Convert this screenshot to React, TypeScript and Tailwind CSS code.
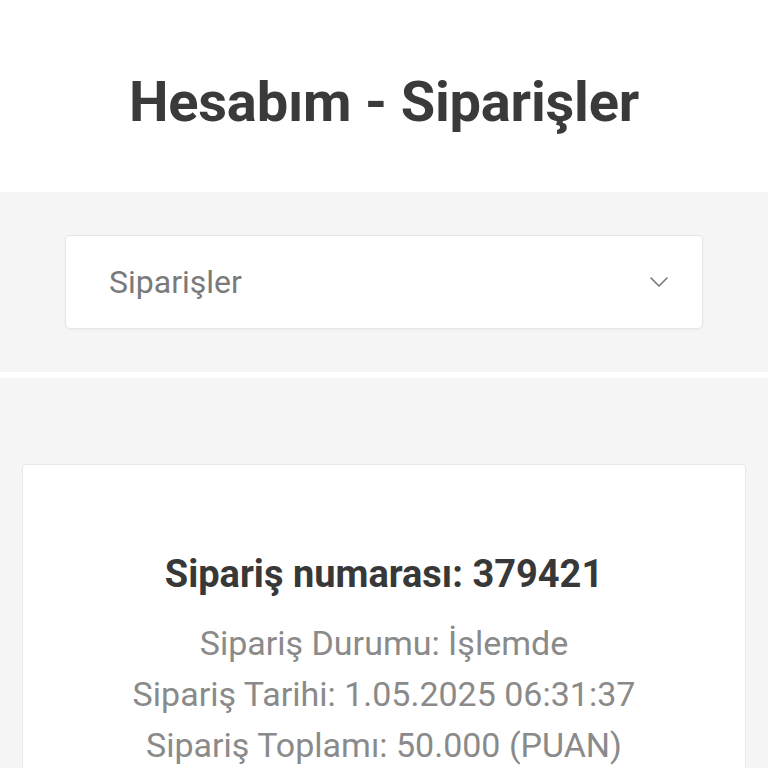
import { ChevronDown } from 'lucide-react';

type Order = {
  id: number;
  status: string;
  date: string;
  total: string;
};

const orders: Order[] = [
  { id: 379421, status: 'İşlemde', date: '1.05.2025 06:31:37', total: '50.000 (PUAN)' },
];

export default function App() {
  return (
    <div className="min-h-screen bg-[#f5f5f5] font-['Roboto',sans-serif]">
      {/* Page title */}
      <div className="bg-white h-[192px] flex items-center justify-center pt-[12px]">
        <h1 className="text-[56px] font-bold text-[#3a3a3a] tracking-[-0.2px]">Hesabım - Siparişler</h1>
      </div>

      {/* Section select */}
      <div className="px-[65px] pt-[43px] pb-[43px]">
        <div className="h-[94px] bg-white border border-[#e6e6e6] rounded-[5px] shadow-[0_1px_2px_rgba(0,0,0,0.04)] flex items-center justify-between pl-[43px] pr-[27px]">
          <span className="text-[32px] text-[#7a7a7a]">Siparişler</span>
          <ChevronDown className="w-[32px] h-[32px] text-[#777]" strokeWidth={1.2} />
        </div>
      </div>

      <div className="h-[6px] bg-white" />

      {/* Orders */}
      <div className="px-[22px] pt-[86px]">
        {orders.map(order => (
          <div key={order.id} className="bg-white border border-[#e8e8e8] rounded-[3px] pt-[81px] pb-[40px] text-center">
            <h2 className="text-[38px] font-bold text-[#383838] mb-[15px]">Sipariş numarası: {order.id}</h2>
            <p className="text-[34px] leading-[51px] text-[#8a8a8a]">Sipariş Durumu: {order.status}</p>
            <p className="text-[34px] leading-[51px] text-[#8a8a8a]">Sipariş Tarihi: {order.date}</p>
            <p className="text-[34px] leading-[51px] text-[#8a8a8a]">Sipariş Toplamı: {order.total}</p>
          </div>
        ))}
      </div>
    </div>
  );
}
